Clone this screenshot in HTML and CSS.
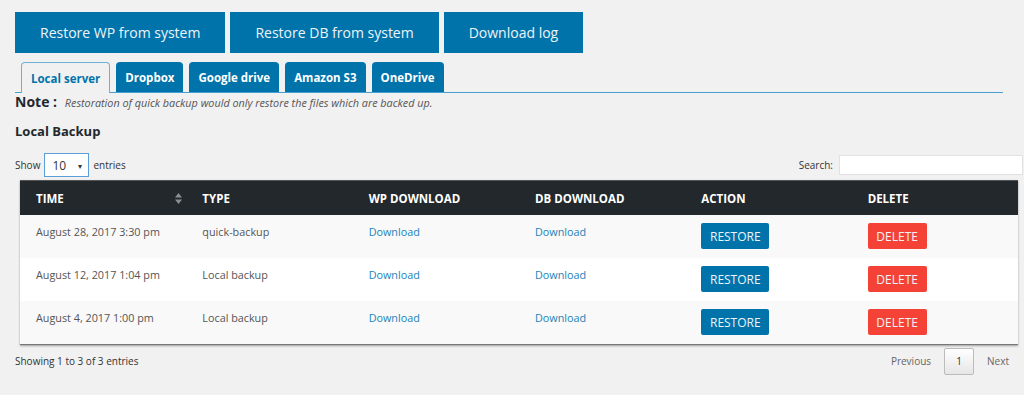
FILE: index.html
```html
<!DOCTYPE html>
<html lang="en">

<head>
  <meta charset="UTF-8" />
  <meta name="viewport" content="width=device-width, initial-scale=1.0" />
  <title>Backup - Restore</title>
  <link rel="stylesheet" href="styles.css">
</head>

<body>
  <div class="wrap">
    <!-- Top action buttons -->
    <div class="top-actions">
      <a class="big-btn" href="#">Restore WP from system</a>
      <a class="big-btn" href="#">Restore DB from system</a>
      <a class="big-btn" href="#">Download log</a>
    </div>

    <!-- Storage tabs -->
    <div class="tabs">
      <a class="tab active" href="#">Local server</a>
      <a class="tab" href="#">Dropbox</a>
      <a class="tab" href="#">Google drive</a>
      <a class="tab" href="#">Amazon S3</a>
      <a class="tab" href="#">OneDrive</a>
    </div>

    <p class="note"><b>Note :</b> <i>Restoration of quick backup would only restore the files which are backed up.</i></p>

    <h3 class="section-title">Local Backup</h3>

    <div class="table-tools">
      <label class="length">Show
        <span class="select-box">10 <span class="caret">&#9662;</span></span>
        entries</label>
      <label class="search">Search: <input type="text" /></label>
    </div>

    <table class="backups">
      <thead>
        <tr>
          <th class="sortable">Time
            <svg class="sort-icon" width="7" height="11" viewBox="0 0 7 11">
              <path d="M3.5 0 L7 4.5 H0 Z" fill="#8c8f94" />
              <path d="M3.5 11 L7 6.5 H0 Z" fill="#8c8f94" />
            </svg>
          </th>
          <th>Type</th>
          <th>WP Download</th>
          <th>DB Download</th>
          <th>Action</th>
          <th>Delete</th>
        </tr>
      </thead>
      <tbody>
        <tr>
          <td>August 28, 2017 3:30 pm</td>
          <td>quick-backup</td>
          <td><a href="#">Download</a></td>
          <td><a href="#">Download</a></td>
          <td><button class="btn-restore">RESTORE</button></td>
          <td><button class="btn-delete">DELETE</button></td>
        </tr>
        <tr>
          <td>August 12, 2017 1:04 pm</td>
          <td>Local backup</td>
          <td><a href="#">Download</a></td>
          <td><a href="#">Download</a></td>
          <td><button class="btn-restore">RESTORE</button></td>
          <td><button class="btn-delete">DELETE</button></td>
        </tr>
        <tr>
          <td>August 4, 2017 1:00 pm</td>
          <td>Local backup</td>
          <td><a href="#">Download</a></td>
          <td><a href="#">Download</a></td>
          <td><button class="btn-restore">RESTORE</button></td>
          <td><button class="btn-delete">DELETE</button></td>
        </tr>
      </tbody>
    </table>

    <div class="table-footer">
      <span class="info">Showing 1 to 3 of 3 entries</span>
      <div class="paging">
        <span class="page-link">Previous</span>
        <span class="page-current">1</span>
        <span class="page-link">Next</span>
      </div>
    </div>
  </div>
</body>

</html>
```

FILE: styles.css
```css
/* Page base */
body {
  margin: 0;
  background-color: #f1f1f1;
  font-family: "Open Sans", "Noto Sans", sans-serif;
  color: #444;
}

.wrap {
  padding: 12px 1px 0 15px;
}

/* Top buttons */
.top-actions {
  display: flex;
  gap: 5px;
}

.big-btn {
  display: flex;
  align-items: center;
  justify-content: center;
  height: 41px;
  padding: 0 25px;
  background-color: #0073aa;
  color: #eef4f8;
  font-size: 14px;
  text-decoration: none;
}

/* Tabs */
.tabs {
  display: flex;
  gap: 6px;
  margin: 9px 20px 0 0;
  padding-left: 6px;
  border-bottom: 1px solid #4a9fce;
}

.tab {
  display: flex;
  align-items: center;
  height: 30px;
  padding: 0 9px;
  background-color: #0073aa;
  color: #fff;
  font-size: 11.5px;
  font-weight: 700;
  text-decoration: none;
  border-radius: 4px 4px 0 0;
  box-sizing: border-box;
}

.tab.active {
  background-color: #f1f1f1;
  color: #0073aa;
  border: 1px solid #6fb1d6;
  border-bottom: none;
  margin-bottom: -1px;
  height: 31px;
  padding: 0 9px;
}

/* Note line */
.note {
  margin: 1px 0 0;
  font-size: 10.8px;
  color: #555;
  line-height: 16px;
}

.note b {
  font-size: 14px;
  color: #23282d;
  margin-right: 5px;
}

.section-title {
  margin: 11px 0 0;
  font-size: 13px;
  font-weight: 700;
  color: #23282d;
}

/* Show entries + search */
.table-tools {
  display: flex;
  justify-content: space-between;
  align-items: center;
  margin-top: 13px;
  font-size: 10px;
  color: #333;
}

.length {
  display: flex;
  align-items: center;
  gap: 4px;
}

.select-box {
  display: flex;
  align-items: center;
  justify-content: space-between;
  width: 45px;
  height: 24px;
  padding: 0 6px 0 7px;
  box-sizing: border-box;
  background-color: #fff;
  border: 1px solid #5b9dd9;
  font-size: 12px;
  color: #32373c;
}

.caret {
  font-size: 8px;
}

.search {
  display: flex;
  align-items: center;
  gap: 6px;
}

.search input {
  width: 184px;
  height: 20px;
  box-sizing: border-box;
  border: 1px solid #e2e2e2;
  background-color: #fff;
  margin: 0;
}

/* Table */
.backups {
  width: 998px;
  margin: 3px 0 0 5px;
  border-collapse: collapse;
  table-layout: fixed;
  box-shadow: 0 1px 2px rgba(0, 0, 0, 0.35);
  border-bottom: 1px solid #777;
}

.backups th {
  height: 34px;
  padding: 0 16px;
  background-color: #23282d;
  color: #fff;
  font-size: 11.5px;
  font-weight: 700;
  text-align: left;
  text-transform: uppercase;
  border-top: 1px solid #555;
}

.sortable {
  position: relative;
}

.sort-icon {
  position: absolute;
  right: 4px;
  top: 12px;
}

.backups td {
  height: 43px;
  padding: 0 16px;
  font-size: 10.8px;
  color: #555;
  vertical-align: top;
  padding-top: 9px;
  box-sizing: border-box;
}

.backups tbody tr:nth-child(odd) {
  background-color: #f9f9f9;
}

.backups tbody tr:nth-child(even) {
  background-color: #fff;
}

.backups td a {
  color: #1a82b8;
  text-decoration: none;
}

.btn-restore,
.btn-delete {
  height: 26px;
  margin-top: -1px;
  border: none;
  border-radius: 2px;
  color: #eef4f8;
  font-family: inherit;
  font-size: 12px;
  padding: 0;
}

.btn-restore {
  background-color: #0073aa;
  width: 68px;
}

.btn-delete {
  background-color: #f44336;
  width: 59px;
}

/* Footer */
.table-footer {
  display: flex;
  justify-content: space-between;
  align-items: center;
  margin: 3px 1px 0 0;
  font-size: 10px;
  color: #333;
}

.paging {
  display: flex;
  align-items: center;
}

.page-link {
  color: #666;
  padding: 0 13px;
}

.page-current {
  display: flex;
  align-items: center;
  justify-content: center;
  width: 30px;
  height: 27px;
  box-sizing: border-box;
  border: 1px solid #bbb;
  border-radius: 2px;
  background: linear-gradient(#fff, #e6e6e6);
  color: #333;
}
```
